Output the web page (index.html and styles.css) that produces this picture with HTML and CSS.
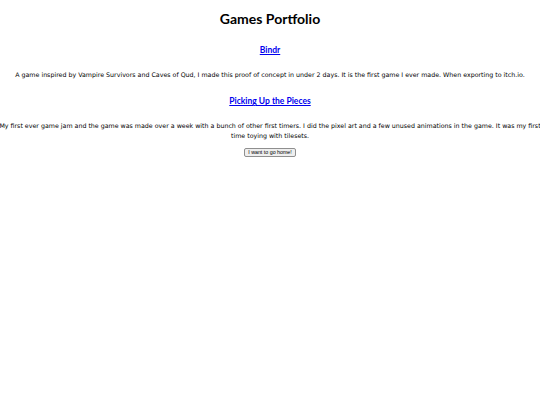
FILE: index.html
```html
<!DOCTYPE html>
<html>
<head>
<meta charset="utf-8">
<link rel="stylesheet" href="styles.css">
</head>
<body>
<h1 class="title">Games Portfolio</h1>
<section class="game">
  <h2 class="game-name"><a href="#">Bindr</a></h2>
  <p class="game-desc">A game inspired by Vampire Survivors and Caves of Qud, I made this proof of concept in under 2 days. It is the first game I ever made. When exporting to itch.io.</p>
</section>
<section class="game">
  <h2 class="game-name"><a href="#">Picking Up the Pieces</a></h2>
  <p class="game-desc">My first ever game jam and the game was made over a week with a bunch of other first timers. I did the pixel art and a few unused animations in the game. It was my first time toying with tilesets.</p>
</section>
<button class="home-btn">I want to go home!</button>
</body>
</html>
```
FILE: styles.css
```css
html, body {
  margin: 0;
  padding: 0;
  background: #ffffff;
}
body {
  font-family: "DejaVu Sans", sans-serif;
  color: #000;
  text-align: center;
  overflow-x: hidden;
}
.title {
  font-family: "Lato", "DejaVu Sans", sans-serif;
  font-size: 14px;
  font-weight: bold;
  margin: 10px 0 0;
  line-height: 18px;
}
.game-name {
  font-family: "Lato", "DejaVu Sans", sans-serif;
  font-size: 8.5px;
  font-weight: bold;
  margin: 16px 0 0;
  line-height: 12px;
}
.game + .game .game-name {
  margin-top: 15px;
}
.game-name a {
  color: #0000ee;
}
.game-desc {
  font-size: 6.3px;
  line-height: 10px;
  margin: 14px -8px 0;
}
.home-btn {
  display: block;
  font-family: "Liberation Sans", Arial, sans-serif;
  font-size: 5.3px;
  line-height: 7px;
  margin: 7px auto 0;
  padding: 0 3px;
  background: #efefef;
  border: 1px solid #8f8f8f;
  border-radius: 2px;
  color: #000;
}
```
